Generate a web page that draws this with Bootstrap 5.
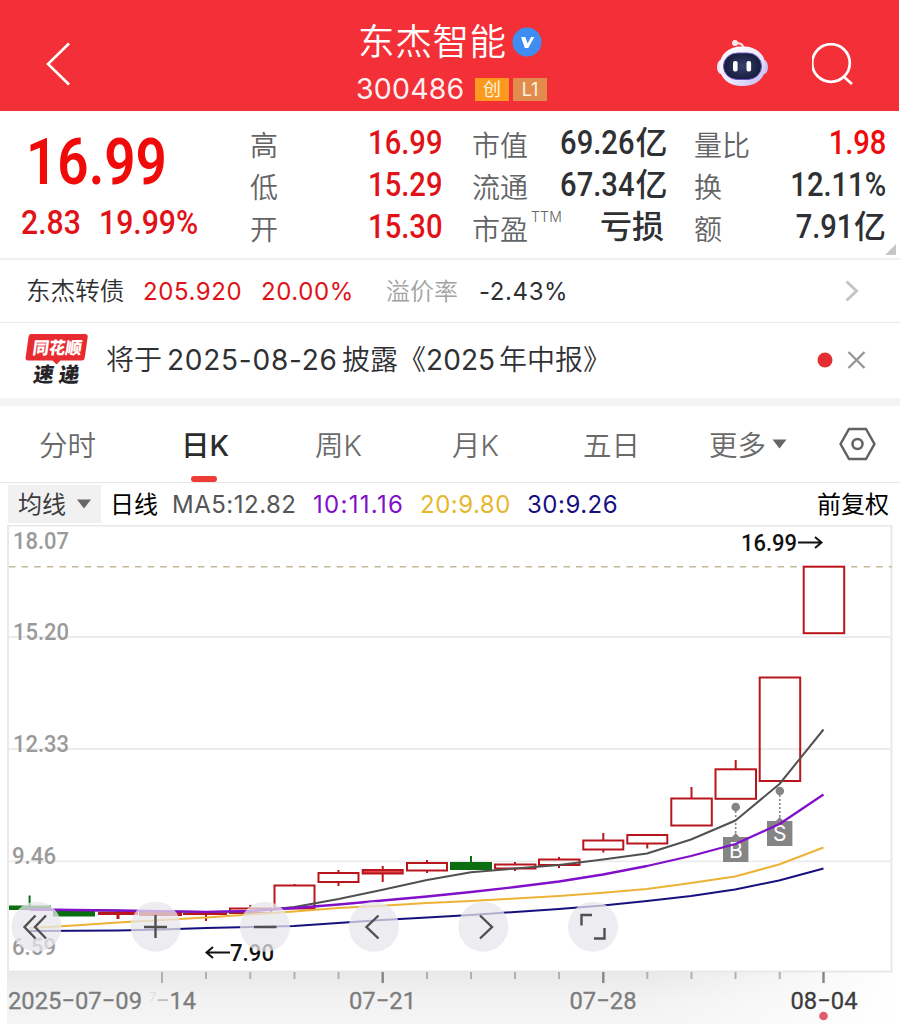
<!DOCTYPE html>
<html lang="zh-CN">
<head>
<meta charset="utf-8">
<meta name="viewport" content="width=device-width, initial-scale=1">
<title>东杰智能 300486</title>
<link href="https://cdn.jsdelivr.net/npm/bootstrap@5.3.0/dist/css/bootstrap.min.css" rel="stylesheet">
<style>
  body { width: 900px; height: 1024px; overflow: hidden; background: #fff; color: #2f3033;
         font-family: Inter, "Noto Sans CJK SC", sans-serif; line-height: 1; }
  svg { display: block; }
  .fixed-grid { display: grid; align-items: center; white-space: nowrap; }

  .top-bar { width: 899px; height: 111px; background: #f33038; color: #fff; padding-top: 17px;
             grid-template-columns: 356px 361px 95px 1fr; margin-bottom: 1px; }
  .stock-name { font-size: 36.5px; letter-spacing: .7px; line-height: 42px; padding-left: 2px; font-weight: 350; }
  .stock-code { font-size: 28.5px; line-height: 36px; width: 119px; letter-spacing: .2px; opacity: .93; }
  .tag { width: 34px; height: 23px; line-height: 23px; font-size: 18px; text-align: center; color: #fff3e0; }
  .tag-cy { background: #fb9a1c; }
  .tag-l1 { background: #e18b4c; margin-left: 4px; }

  .quote { height: 148px; border-bottom: 2px solid #f1f1f1; grid-template-columns: 250px 650px; position: relative; }
  .din { font-family: Roboto, "Noto Sans CJK SC", sans-serif; font-weight: 500; display: inline-block;
         transform: scaleX(.87); transform-origin: 0 50%; }
  .up { color: #f00a0a; }
  .up2 { color: #e01217; }
  .price { font-size: 64.5px; line-height: 72px; margin: 0 0 4px 26px; font-weight: 600; transform: scaleX(.85); }
  .delta { font-size: 33.5px; line-height: 42px; }
  .delta .din { transform: scaleX(.9); }
  .stats { grid-template-columns: 95px 97px 30px 77px 115px 30px 76px 116px; grid-auto-rows: 42px; height: 126px; }
  .stats dt { font-weight: 350; font-size: 28px; color: #636466; margin: 0; line-height: 38px; padding-top: 5px; }
  .stats dd { margin: 0; font-size: 33.5px; line-height: 40px; height: 42px; text-align: right; }
  .stats .din { transform-origin: 100% 50%; }
  .stats .cn { font-size: 32px; line-height: 36px; font-weight: 500; font-family: "Noto Sans CJK SC", sans-serif; }
  .stats .unit { margin-left: 1px; }
  .stats dd.words { line-height: 36px; }
  .ttm { font-size: 14px; position: absolute; margin: -13px 0 0 3px; letter-spacing: .2px; }
  .corner { position: absolute; right: 4px; bottom: 3px; }

  .num { font-weight: 400; letter-spacing: .6px; }
  .bond { height: 63px; border-bottom: 1px solid #e9e9e9; font-size: 24px; font-weight: 350; padding-top: 1px;
          grid-template-columns: 117px 118px 125px 93px 1fr 66px; padding-left: 26px; }
  .bond .nm { font-size: 24.6px; }
  .news { height: 75px; font-size: 28px; font-weight: 350; padding: 0 0 2px 25px;
          grid-template-columns: 81px 61px 175px 84px 73px 1fr 30px 53px; }
  .band { height: 8px; background: #f3f3f3; }

  .tabs { height: 77px; border-bottom: 1px solid #e6e6e6; font-size: 28.5px; color: #6a6a6a; font-weight: 350;
          padding-left: 39px; grid-template-columns: 142px 134px 137px 131px 126px 130px 1fr; position: relative; }
  .tabs > span { padding-top: 4px; }
  .tabs .on { color: #2b2b2b; font-weight: 500; }
  .mark-bar { position: absolute; left: 191px; bottom: 0; width: 26px; height: 6px; border-radius: 3px; background: #ee3b33; }

  .ma-row { height: 42px; font-size: 24px; padding-left: 8px;
            grid-template-columns: 102px 62px 141px 107px 107px 1fr 83px; }
  .ma-row > span { padding-top: 1px; }
  .ma-row .num { letter-spacing: .5px; }
  .ma-row .wide { letter-spacing: 1.3px; }
  .ma-pick { width: 93px; height: 38px; background: #f1f1f2; color: #3d3d3d; padding-left: 10px; }
  .cand { fill: none; stroke: #b8161c; stroke-width: 2; }
  .axis-num { font-family: Roboto, sans-serif; font-weight: 500; fill: #9a9a9a; font-size: 24.5px; }
  .date-num { font-family: Roboto, sans-serif; font-weight: 400; fill: #7c7c7c; stroke: #7c7c7c; stroke-width: .3px; font-size: 24.5px; }
</style>
</head>
<body>
<header class="top-bar fixed-grid">
  <svg width="90" height="60" viewBox="0 39 90 60" fill="none" stroke="#fff" stroke-width="2.6"><path d="M69 44.500 L48 65 L69 85.500" transform="translate(0 4)"/></svg>
  <div>
    <div class="d-flex align-items-center">
      <span class="stock-name">东杰智能</span>
      <svg class="ms-1" style="position:relative;left:1.5px" width="30" height="30" viewBox="0 0 30 30"><circle cx="15" cy="15" r="14.500" fill="#3f8df0"/><path d="M9 10h4.200l2.500 6.500L19 10h3.300l-6 11h-3.500z" fill="#fff"/></svg>
    </div>
    <div class="d-flex align-items-center mt-2">
      <span class="stock-code">300486</span><span class="tag tag-cy">创</span><span class="tag tag-l1">L1</span>
    </div>
  </div>
  <svg width="52" height="50" viewBox="0 0 52 50">
    <defs><linearGradient id="shell" x1="0" y1="0" x2="1" y2="1"><stop offset="0" stop-color="#fff"/><stop offset=".55" stop-color="#eeeafc"/><stop offset="1" stop-color="#bdb5f0"/></linearGradient>
    <radialGradient id="visor"><stop offset="0" stop-color="#35416b"/><stop offset="1" stop-color="#171d3d"/></radialGradient></defs>
    <path d="M18 4.500q7-1.500 8.500 4" fill="none" stroke="#f6dfe6" stroke-width="2"/><circle cx="18" cy="4" r="3" fill="#fbe9ee"/>
    <ellipse cx="4" cy="28" rx="4" ry="7" fill="#e9e4fb"/><ellipse cx="47" cy="28" rx="4" ry="7" fill="#c9c1f3"/>
    <rect x="2.500" y="7.500" width="46" height="39.500" rx="21" ry="19" fill="url(#shell)"/>
    <rect x="6.500" y="14" width="38" height="26.500" rx="14" ry="13" fill="url(#visor)" stroke="#6d55c8" stroke-width="1"/>
    <rect x="16" y="22" width="4.600" height="10.500" rx="2" fill="#fff"/><rect x="29.500" y="22" width="4.600" height="10.500" rx="2" fill="#fff"/>
  </svg>
  <svg width="44" height="44" viewBox="0 0 44 44" style="margin-top:2px" fill="none" stroke="#fff" stroke-width="2.700"><circle cx="19" cy="20" r="18.800"/><path d="M31.500 33.500L40 41"/></svg>
</header>

<section class="quote fixed-grid">
  <div>
    <div class="d-flex"><span class="din price up">16.99</span></div>
    <div class="d-flex delta up2"><span class="din" style="margin-left:21px;width:78px">2.83</span><span class="din">19.99%</span></div>
  </div>
  <dl class="stats fixed-grid mb-0">
    <dt>高</dt><dd class="up2"><span class="din">16.99</span></dd><i></i><dt>市值</dt><dd><span class="din">69.26</span><span class="cn unit">亿</span></dd><i></i><dt>量比</dt><dd class="up"><span class="din">1.98</span></dd>
    <dt>低</dt><dd class="up2"><span class="din">15.29</span></dd><i></i><dt>流通</dt><dd><span class="din">67.34</span><span class="cn unit">亿</span></dd><i></i><dt>换</dt><dd><span class="din">12.11%</span></dd>
    <dt>开</dt><dd class="up2"><span class="din">15.30</span></dd><i></i><dt>市盈<span class="ttm">TTM</span></dt><dd class="words"><span class="cn">亏损</span></dd><i></i><dt>额</dt><dd><span class="din">7.91</span><span class="cn unit">亿</span></dd>
  </dl>
  <svg class="corner" width="11" height="11"><path d="M11 0v11H0z" fill="#c6c6c6"/></svg>
</section>

<section class="bond fixed-grid">
  <span class="nm">东杰转债</span><span class="up2 num">205.920</span><span class="up2 num">20.00%</span><span style="color:#a2a2a2">溢价率</span><span class="num">-2.43%</span>
  <svg width="30" height="24" fill="none" stroke="#c4c4c4" stroke-width="3"><path d="M12.500 1.500l10 9.500-10 9.500"/></svg>
</section>

<section class="news fixed-grid">
  <svg width="64" height="54" viewBox="25 333 64 54">
    <path d="M31 334h54q3 0 2.700 3l-3 21q-.4 2.500-3 2.500H60.500l-4 4-4-4H28q-2.800 0-2.400-3l3-21q.4-2.500 2.400-2.500z" fill="#e82b30"/>
    <g font-family="Noto Sans CJK SC" font-weight="900">
      <text transform="translate(32 354) skewX(-8)" font-size="17" textLength="49" lengthAdjust="spacingAndGlyphs" fill="#fff">同花顺</text>
      <text transform="translate(32.500 382) skewX(-8)" font-size="20.500" textLength="46" fill="#252428">速递</text>
    </g>
  </svg>
  <span>将于</span><span class="num" style="letter-spacing:.75px">2025-08-26</span><span>披露《</span><span class="num" style="letter-spacing:.1px">2025</span><span>年中报》</span>
  <svg width="16" height="16"><circle cx="8" cy="8" r="7.500" fill="#e42e33"/></svg>
  <svg width="19" height="18" fill="none" stroke="#969696" stroke-width="2.400"><path d="M1.500 1l16 16M17.500 1l-16 16"/></svg>
</section>
<div class="band"></div>

<nav class="tabs fixed-grid">
  <span>分时</span><span class="on">日K</span><span>周K</span><span>月K</span><span>五日</span>
  <span class="d-flex align-items-center">更多<svg style="margin:-4px 0 0 6px" width="15" height="10"><path d="M.5.500h14l-7 9z" fill="#666"/></svg></span>
  <svg width="37" height="34" viewBox="0 0 37 34" fill="none" stroke="#616161" stroke-width="2.500" stroke-linejoin="round"><path d="M10 2h17l8.500 15L27 32H10L1.500 17z"/><circle cx="18.500" cy="17" r="5"/></svg>
  <i class="mark-bar"></i>
</nav>

<div class="ma-row fixed-grid">
  <span class="ma-pick d-flex align-items-center">均线<svg style="margin:-2px 0 0 11px" width="14" height="10"><path d="M0 .5h14l-7 9z" fill="#666"/></svg></span>
  <span class="text-black">日线</span><span class="num" style="color:#555">MA5:12.82</span><span class="num wide" style="color:#820fc9">10:11.16</span><span class="num" style="color:#e6b72d">20:9.80</span><span class="num" style="color:#17107f">30:9.26</span><span class="text-black">前复权</span>
</div>

<svg width="900" height="499" viewBox="0 525 900 499">
  <defs><linearGradient id="foot" x1="0" y1="0" x2="0" y2="1"><stop offset="0" stop-color="#e9e9e9"/><stop offset=".5" stop-color="#f2f2f2"/><stop offset="1" stop-color="#f5f5f5"/></linearGradient>
  <linearGradient id="fade" x1="0" y1="0" x2="1" y2="0"><stop offset="0" stop-color="#fff" stop-opacity="0"/><stop offset="1" stop-color="#fff"/></linearGradient></defs>
  <rect x="7" y="972" width="893" height="52" fill="url(#foot)"/>
  <rect x="650" y="972" width="250" height="52" fill="url(#fade)"/>
  <rect x="8" y="525.500" width="883.500" height="446" fill="#fff" stroke="#e8e8e8" stroke-width="2"/>
  <path d="M9 637h881M9 749h881M9 861.300h881" stroke="#ececec" stroke-width="1.800"/>
  <g class="axis-num">
    <text x="13" y="549" textLength="56" lengthAdjust="spacingAndGlyphs">18.07</text>
    <text x="13" y="640" textLength="56" lengthAdjust="spacingAndGlyphs">15.20</text>
    <text x="13" y="752" textLength="56" lengthAdjust="spacingAndGlyphs">12.33</text>
    <text x="12" y="864" textLength="44" lengthAdjust="spacingAndGlyphs">9.46</text>
    <text x="12" y="955" textLength="44" lengthAdjust="spacingAndGlyphs">6.59</text>
  </g>
  <!-- candles -->
  <g class="cand">
    <path d="M98 913.500h40M118 911v8" stroke-width="3"/>
    <rect x="140" y="913" width="41" height="2"/>
    <path d="M183 914h44M206 912v9"/>
    <rect x="230" y="908.500" width="41" height="4.500"/><path d="M250.300 905v3"/>
    <rect x="274.500" y="885.500" width="40" height="23"/><path d="M294.500 884v2"/>
    <rect x="318.500" y="873" width="40" height="9"/><path d="M338.500 870v3M338.500 882v4"/>
    <rect x="362.700" y="870" width="40" height="3.500" fill="#e0484c"/><path d="M382.700 866v4M382.700 873v9"/>
    <rect x="407" y="863" width="40" height="7.500"/><path d="M427 860v3M427 870v3"/>
    <rect x="495" y="864.500" width="40.500" height="4"/><path d="M515 862v2M515 868v3"/>
    <rect x="539" y="859.500" width="40.500" height="5.500"/><path d="M559 857v2M559 865v3"/>
    <rect x="583.300" y="840.500" width="40" height="9"/><path d="M603.300 833v8M603.300 849v3.500"/>
    <rect x="627.300" y="835" width="40" height="8.500"/><path d="M647.300 843v5.500"/>
    <rect x="671.300" y="798.500" width="40.500" height="27"/><path d="M691.500 787v11"/>
    <rect x="715.500" y="769.300" width="40.500" height="29.500"/><path d="M735.700 760v9"/>
    <rect x="759.700" y="677.500" width="40.500" height="103.500"/>
    <rect x="803.700" y="566.700" width="40.500" height="66.500"/>
  </g>
  <path d="M9 566.800H803M851 566.800H892" stroke="#c3b998" stroke-width="1.400" stroke-dasharray="6.500 6.100"/>
  <g fill="#0b6e10"><path d="M9 905.500h42v4.500H9zM28.600 895.500h2v10h-2zM53 911h42v5.500H53zM450 862h42v8h-42zM470 856h2v6h-2z"/></g>
  <!-- B / S marks -->
  <g fill="#858585">
    <circle cx="735.700" cy="807" r="4.300"/><circle cx="779.800" cy="791" r="4.300"/>
    <path d="M735.700 811v22M779.800 795v22" stroke="#858585" stroke-width="1.600" stroke-dasharray="2 2"/>
    <path d="M723 837h9l3.700-4 3.700 4h9v25H723zM767 821h9l3.700-4 3.700 4h9v25H767z"/>
  </g>
  <g fill="#fff" font-family="Inter" font-size="21" text-anchor="middle"><text x="735.800" y="857.500">B</text><text x="779.700" y="841">S</text></g>
  <!-- moving averages -->
  <g fill="none" stroke-width="2" stroke-linejoin="round">
    <path stroke="#17107f" d="M29.700 931L118 930.500 162 929.500 206 928 250 927 294 926 338 923 382 920 427 917.500 471 915 515 912 559 909 603 905.500 647 901 691 896 735 889.500 779 880.500 823.500 868.500"/>
    <path stroke="#edb336" d="M29.700 928L74 925.500 118 922.500 162 920 206 917.500 250 914.500 294 911.500 338 908 382 905.700 427 903 471 901 515 898.500 559 896 603 892.700 647 889 691 883 735 876.500 779 864.500 823.500 847.500"/>
    <path stroke="#505050" d="M29.700 909.500L206 912 250 911.500 294.500 907 338.600 899 382.700 889.700 427 880 471 872.300 515 868.500 559 865 603 859.500 647 853.500 691 839.500 735.500 820.500 779.500 784 823.500 729.500"/>
    <path stroke="#820fc9" stroke-width="2.300" d="M29.700 909.500L118 910.500 206 911.800 250 911 294.500 908 338.600 904.500 382.700 900.500 427 896.500 471 892 515 887 559 881.500 603 874.500 647 866 691 856 735.500 844 779.500 824 823.500 794.500"/>
  </g>
  <g font-family="Roboto" font-weight="500" font-size="24.500" fill="#111">
    <text x="741" y="551" textLength="56" lengthAdjust="spacingAndGlyphs">16.99</text>
    <text x="230" y="961" textLength="44" lengthAdjust="spacingAndGlyphs">7.90</text>
    <path d="M798 542.500h23M815 537l6.500 5.500-6.500 5.500M230 952.500h-23M213 947l-6.500 5.500 6.500 5.500" fill="none" stroke="#111" stroke-width="2"/>
  </g>
  <!-- chart controls -->
  <g fill="#e7e7ec" fill-opacity=".74"><circle cx="36.500" cy="926.700" r="25"/><circle cx="155.700" cy="926.700" r="25"/><circle cx="265" cy="926.700" r="25"/><circle cx="374" cy="926.700" r="25"/><circle cx="483.300" cy="926.700" r="25"/><circle cx="593" cy="926.700" r="25"/></g>
  <path fill="none" stroke="#505050" stroke-width="2.400" d="M35.500 915.500l-11 11.500 11 11.500M46 915.500l-11 11.500 11 11.500M144 927h23M155.500 915v23M254 927h22.500M378.500 915.500l-12 11.500 12 11.500M480 915.500l12 11.500-12 11.500M581.500 925.500v-10.500h10.500M594 938.500h10.500v-10.500"/>
  <path stroke="#b0b0b0" stroke-width="2" d="M206 972v7M250.300 972v7M294.500 972v7M338.500 972v7M427 972v7M471 972v7M515 972v7M559 972v7M647.300 972v7M691.500 972v7M735.500 972v7M779.700 972v7M162 972v11"/>
  <path stroke="#858585" stroke-width="2.400" d="M382.700 972v11M603.300 972v11M823.500 972v11"/>
  <g class="date-num">
    <text x="8" y="1009" textLength="134" lengthAdjust="spacingAndGlyphs">2025−07−09</text>
    <text x="149" y="1001" style="font-size:13px" fill="#dedede" stroke="none">7</text>
    <text x="156" y="1009" textLength="40" lengthAdjust="spacingAndGlyphs"><tspan fill="#bcbcbc" stroke="none">−</tspan>14</text>
    <text x="349" y="1009" textLength="67" lengthAdjust="spacingAndGlyphs">07−21</text>
    <text x="569.500" y="1009" textLength="67" lengthAdjust="spacingAndGlyphs">07−28</text>
    <text x="790.500" y="1009" textLength="67" lengthAdjust="spacingAndGlyphs" fill="#3c3c3c" stroke="#3c3c3c">08−04</text>
  </g>
  <circle cx="823.500" cy="1016" r="4.300" fill="#e25b68"/>
</svg>
</body>
</html>
